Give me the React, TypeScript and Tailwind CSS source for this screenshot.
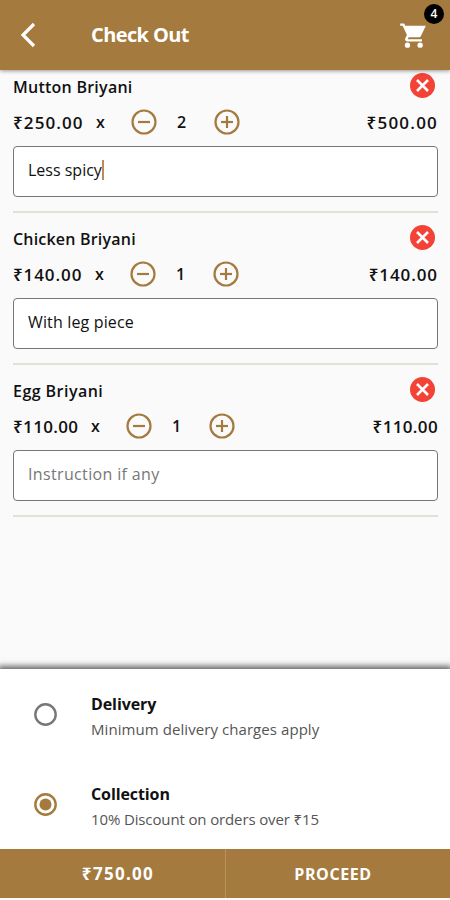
type Item = {
  name: string;
  price: string;
  qty: number;
  total: string;
  note: string;
  focused?: boolean;
  nameClass: string;
  priceClass: string;
  totalClass: string;
  noteClass: string;
};

const items: Item[] = [
  {
    name: "Mutton Briyani",
    price: "₹250.00",
    qty: 2,
    total: "₹500.00",
    note: "Less spicy",
    focused: true,
    nameClass: "tracking-[0.25px]",
    priceClass: "w-[83px] tracking-[1.1px]",
    totalClass: "tracking-[1.2px]",
    noteClass: "tracking-[0px]",
  },
  {
    name: "Chicken Briyani",
    price: "₹140.00",
    qty: 1,
    total: "₹140.00",
    note: "With leg piece",
    nameClass: "tracking-[0.2px]",
    priceClass: "w-[82px] tracking-[0.9px]",
    totalClass: "tracking-[0.9px]",
    noteClass: "tracking-[0.15px]",
  },
  {
    name: "Egg Briyani",
    price: "₹110.00",
    qty: 1,
    total: "₹110.00",
    note: "",
    nameClass: "tracking-[0.45px]",
    priceClass: "w-[78px] tracking-[0.35px]",
    totalClass: "tracking-[0.35px]",
    noteClass: "tracking-[0.35px]",
  },
];

function StepIcon({ plus }: { plus?: boolean }) {
  return (
    <svg className="h-[26px] w-[26px] shrink-0" viewBox="0 0 26 26" fill="none" stroke="#a47a3e" strokeWidth="2.2">
      <circle cx="13" cy="13" r="11.5" />
      <path d="M7 13h12" />
      {plus && <path d="M13 7v12" />}
    </svg>
  );
}

function CartItem({ item }: { item: Item }) {
  return (
    <li className="flex h-[152px] flex-col">
      <div className="flex h-[25px] items-center justify-between pr-[3px]">
        <h2 className={`pt-[3px] text-base leading-none font-semibold ${item.nameClass}`}>{item.name}</h2>
        <button className="flex h-[25px] w-[25px] items-center justify-center rounded-full bg-[#f34236] text-white">
          <svg className="h-[13px] w-[13px]" viewBox="0 0 13 13" fill="none" stroke="currentColor" strokeWidth="2.6">
            <path d="M1 1l11 11M12 1L1 12" />
          </svg>
        </button>
      </div>

      <div className="mt-[11px] flex h-[26px] items-center text-base leading-none font-semibold">
        <span className={`text-[17px] leading-none whitespace-nowrap ${item.priceClass}`}>{item.price}</span>
        <span className="w-[35px]">x</span>
        <StepIcon />
        <span className="w-[57px] pr-[8px] text-center">{item.qty}</span>
        <StepIcon plus />
        <span className={`ml-auto text-[17px] leading-none ${item.totalClass}`}>{item.total}</span>
      </div>

      <div className="mt-[11px] flex h-[51px] items-center rounded-[4px] border border-[#777] bg-white pb-[3px] pl-[14px] text-base font-medium">
        {item.note ? (
          <span className={item.noteClass}>{item.note}</span>
        ) : (
          <span className={`font-normal text-[#777] ${item.noteClass}`}>Instruction if any</span>
        )}
        {item.focused && <span className="h-5 w-[2px] bg-[#bd8b59]" />}
      </div>

      <div className="mt-[14px] h-[2px] bg-[#e5e0d4]" />
    </li>
  );
}

type OptionProps = {
  title: string;
  detail: string;
  checked?: boolean;
  detailClass: string;
};

function Option({ title, detail, checked, detailClass }: OptionProps) {
  return (
    <label className="flex h-[90px] items-center pl-[34px]">
      <svg className={`h-[23px] w-[23px] ${checked ? "text-[#a47a3e]" : "text-[#777]"}`} viewBox="0 0 23 23">
        <circle cx="11.5" cy="11.5" r="10.2" fill="none" stroke="currentColor" strokeWidth="2.4" />
        {checked && <circle cx="11.5" cy="11.5" r="6" fill="currentColor" />}
      </svg>
      <span className="ml-[34px] flex flex-col pt-[4px]">
        <span className="text-base leading-[26px] font-bold tracking-[-0.1px]">{title}</span>
        <span className={`-mt-px text-[15px] leading-[26px] text-[#555] ${detailClass}`}>{detail}</span>
      </span>
    </label>
  );
}

export default function App() {
  return (
    <div className="flex h-[900px] w-[450px] flex-col overflow-hidden bg-[#fafafa] font-['Open_Sans','Noto_Sans',sans-serif] text-[#111]">
      <header className="z-10 flex h-[70px] shrink-0 items-center bg-[#a47a3e] text-white shadow-[0_1px_4px_rgba(0,0,0,0.4)]">
        <svg className="ml-[20px] h-[26px] w-[16px]" viewBox="0 0 16 26" fill="none" stroke="currentColor" strokeWidth="3.2">
          <path d="M14 2L3 13l11 11" />
        </svg>
        <h1 className="ml-[55px] text-[20px] font-bold tracking-[-0.6px]">Check Out</h1>
        <div className="relative mr-[22px] ml-auto">
          <svg className="h-[29px] w-[29px]" viewBox="0 0 24 24" fill="currentColor">
            <path d="M1 2v2h2l3.6 7.6-1.35 2.45C4.5 15.4 5.5 17 7 17h12v-2H7.42c-.14 0-.25-.11-.25-.25l.03-.12.9-1.13h8.3c.75 0 1.41-.41 1.75-1.03L22.2 4H5.21l-.94-2H1z" />
            <circle cx="7" cy="20" r="2.2" />
            <circle cx="17.5" cy="20" r="2.2" />
          </svg>
          <span className="absolute -top-[17px] -right-[16px] flex h-5 w-5 items-center justify-center rounded-full bg-black text-[12px] font-semibold">
            4
          </span>
        </div>
      </header>

      <ul className="flex-1 pt-[3px] pr-[12px] pl-[13px]">
        {items.map((item) => (
          <CartItem key={item.name} item={item} />
        ))}
      </ul>

      <section className="h-[180px] shrink-0 bg-white shadow-[0_-1px_6px_2px_rgba(0,0,0,0.6)]">
        <Option title="Delivery" detail="Minimum delivery charges apply" detailClass="tracking-[0.07px]" />
        <Option title="Collection" detail="10% Discount on orders over ₹15" checked detailClass="tracking-[-0.13px]" />
      </section>

      <footer className="z-10 mb-[2px] flex h-[49px] shrink-0 bg-[#a47a3e] text-base font-bold text-white">
        <div className="flex w-[226px] items-center justify-center border-r border-[#b8935f] pl-[11px] text-[17px] tracking-[1.3px]">
          ₹750.00
        </div>
        <button className="flex flex-1 items-center justify-center pr-[10px] tracking-[0.6px]">PROCEED</button>
      </footer>
    </div>
  );
}
